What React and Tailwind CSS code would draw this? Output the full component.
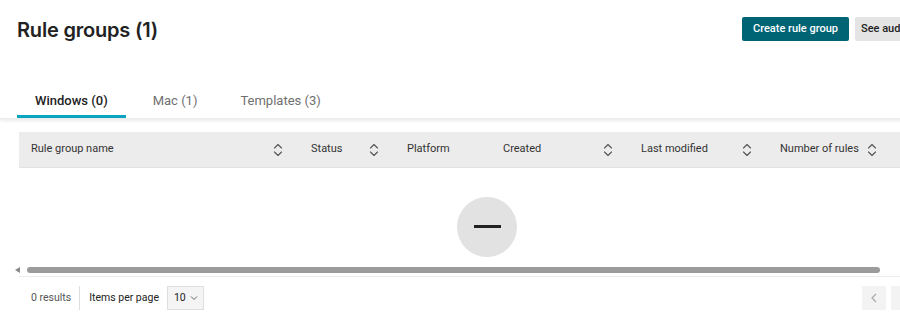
import React from 'react';

const font = { fontFamily: 'Roboto, "Noto Sans", sans-serif' };
const titleFont = { fontFamily: 'Inter, "Noto Sans", sans-serif' };

function SortIcon() {
  return (
    <svg width="10" height="14" viewBox="0 0 10 14" fill="none" stroke="#555" strokeWidth="1.1" strokeLinecap="round" strokeLinejoin="round">
      <path d="M1.5 5L5 1.5L8.5 5" />
      <path d="M1.5 9L5 12.5L8.5 9" />
    </svg>
  );
}

const columns = [
  { label: 'Rule group name', width: 'w-[280px]', sort: true },
  { label: 'Status', width: 'w-[96px]', sort: true },
  { label: 'Platform', width: 'w-[96px]', sort: false },
  { label: 'Created', width: 'w-[138px]', sort: true },
  { label: 'Last modified', width: 'w-[139px]', sort: true },
  { label: 'Number of rules', width: 'w-[180px]', sort: true, inline: true },
];

export default function App() {
  return (
    <div className="w-[900px] h-[323px] overflow-hidden bg-white text-[#222]" style={font}>
      <div className="w-[1000px]">
        {/* Header */}
        <div className="flex items-start pl-[17px] h-[80px]">
          <h1 className="w-[725px] text-[20px] font-semibold mt-[15px] tracking-[-0.2px]" style={titleFont}>Rule groups (1)</h1>
          <div className="flex gap-[6px] mt-[17px]">
            <button className="h-[24px] w-[107px] rounded-[2px] bg-[#006475] text-white text-[11px] font-medium">Create rule group</button>
            <button className="h-[24px] px-[6px] rounded-[2px] bg-[#e4e4e4] text-[#222] text-[11px] font-medium w-[90px] text-left">See audit log</button>
          </div>
        </div>

        {/* Tabs */}
        <div className="shadow-[0_2px_3px_rgba(0,0,0,0.08)] border-b border-[#ececec]">
          <div className="flex pl-[17px] h-[38px]">
            <div className="px-[18px] flex items-center text-[13px] font-medium text-[#222] border-b-[3px] border-[#0aa3c0] pt-[7px]">Windows (0)</div>
            <div className="ml-[9px] px-[18px] flex items-center text-[13px] text-[#707070] pt-[7px] pb-[3px]">Mac (1)</div>
            <div className="ml-[7px] px-[18px] flex items-center text-[13px] text-[#707070] pt-[7px] pb-[3px]">Templates (3)</div>
          </div>
        </div>

        {/* Table */}
        <div className="pl-[19px] mt-[13px]">
          <div className="flex h-[36px] bg-[#ececec] border-b border-[#e2e2e2] text-[11px] text-[#333]">
            {columns.map((c) => (
              <div key={c.label} className={`${c.width} flex items-center px-[12px] ${c.inline ? 'gap-[8px]' : 'justify-between pr-[16px]'}`}>
                <span>{c.label}</span>
                {c.sort && <SortIcon />}
              </div>
            ))}
          </div>
          <div className="h-[98px] flex items-center justify-center w-[936px]">
            <div className="w-[60px] h-[60px] rounded-full bg-[#e2e2e2] flex items-center justify-center mt-[19px]">
              <div className="w-[27px] h-[3px] bg-[#222]" />
            </div>
          </div>
        </div>

        {/* Scrollbar */}
        <div className="flex items-center h-[8px] pl-[15px] w-[900px]">
          <div className="w-0 h-0 border-y-[3px] border-y-transparent border-r-[5px] border-r-[#888]" />
          <div className="ml-[7px] w-[853px] h-[6px] rounded-full bg-[#9b9b9b]" />
        </div>
        <div className="ml-[19px] w-[881px] h-[1px] bg-[#ececec] mt-[2px]" />

        {/* Footer */}
        <div className="flex items-center h-[24px] mt-[9px] w-[900px] text-[10.5px]">
          <span className="pl-[31px] text-[#555]">0 results</span>
          <div className="ml-[8px] w-px h-[24px] bg-[#ddd]" />
          <span className="ml-[9px] text-[#222]">Items per page</span>
          <div className="ml-[8px] h-[24px] w-[37px] bg-[#f4f4f4] border border-[#dedede] flex items-center pl-[6px] gap-[4px] text-[#222]">
            <span>10</span>
            <svg width="8" height="6" viewBox="0 0 8 6" fill="none" stroke="#666" strokeWidth="1">
              <path d="M1 1.5L4 4.5L7 1.5" />
            </svg>
          </div>
          <div className="ml-auto flex gap-[5px]">
            <div className="w-[24px] h-[24px] bg-[#f3f3f3] flex items-center justify-center">
              <svg width="6" height="10" viewBox="0 0 6 10" fill="none" stroke="#aaa" strokeWidth="1.2">
                <path d="M5 1L1 5L5 9" />
              </svg>
            </div>
            <div className="w-[24px] h-[24px] bg-[#f3f3f3] mr-[-15px]" />
          </div>
        </div>
      </div>
    </div>
  );
}
